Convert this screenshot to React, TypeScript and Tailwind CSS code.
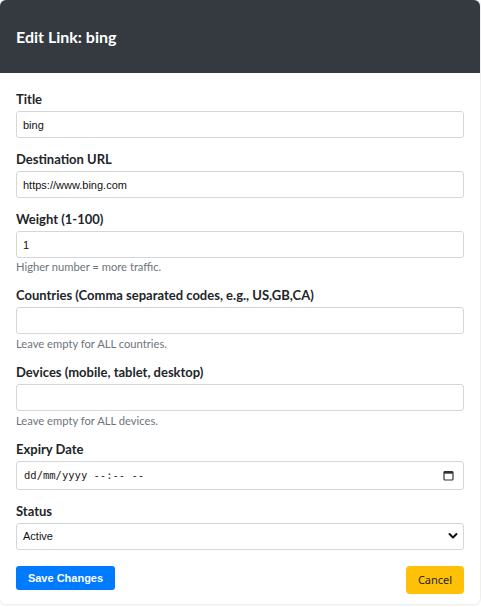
import React from 'react';

const labelCls = "block text-[13px] leading-[19px] font-bold text-[#212529] mb-0.5 font-['Lato',sans-serif]";
const inputCls =
  "block w-full h-[27px] px-[6px] rounded-[3px] border border-[#d4d7da] bg-white text-[11px] text-[#111] font-['Liberation_Sans',Arial,sans-serif] outline-none";
const helpCls = "mt-0.5 text-[11.2px] text-[#6c757d] font-['Lato',sans-serif]";

const Field: React.FC<{ label: string; help?: string; helpLeading?: string; children: React.ReactNode }> = ({
  label,
  help,
  helpLeading = 'leading-[15px]',
  children,
}) => (
  <div className="mb-3">
    <label className={labelCls}>{label}</label>
    {children}
    {help && <p className={helpCls + ' ' + helpLeading}>{help}</p>}
  </div>
);

const App: React.FC = () => {
  return (
    <div className="min-h-screen bg-white">
      <div className="w-[480px] overflow-hidden rounded-[6px] bg-white shadow-[0_0_3px_rgba(0,0,0,0.18)]">
        {/* Header */}
        <div className="flex h-[73px] items-center bg-[#343a40] px-4">
          <h2 className="text-[16px] font-bold text-white font-['Lato',sans-serif]">Edit Link: bing</h2>
        </div>

        {/* Form */}
        <form className="px-4 pt-[17px] pb-[10px]" onSubmit={(e) => e.preventDefault()}>
          <Field label="Title">
            <input className={inputCls} defaultValue="bing" />
          </Field>
          <Field label="Destination URL">
            <input className={inputCls} defaultValue="https://www.bing.com" />
          </Field>
          <Field label="Weight (1-100)" help="Higher number = more traffic." helpLeading="leading-[14px]">
            <input className={inputCls} defaultValue="1" />
          </Field>
          <Field label="Countries (Comma separated codes, e.g., US,GB,CA)" help="Leave empty for ALL countries.">
            <input className={inputCls} />
          </Field>
          <Field label="Devices (mobile, tablet, desktop)" help="Leave empty for ALL devices.">
            <input className={inputCls} />
          </Field>
          <Field label="Expiry Date">
            <div className="flex h-[29px] w-full items-center justify-between rounded-[3px] border border-[#d4d7da] bg-white pl-[7px] pr-[9px]">
              <span className="text-[10.5px] text-[#222] font-['DejaVu_Sans_Mono',monospace]">dd/mm/yyyy --:-- --</span>
              <svg width="11" height="11" viewBox="0 0 11 11" fill="none">
                <rect x="1" y="1.5" width="9" height="8.5" rx="1" stroke="#333" strokeWidth="1.2" />
                <rect x="1" y="1.5" width="9" height="2.2" fill="#333" />
              </svg>
            </div>
          </Field>
          <Field label="Status">
            <div className="relative">
              <select className={inputCls + ' appearance-none'} defaultValue="active">
                <option value="active">Active</option>
                <option value="inactive">Inactive</option>
              </select>
              <svg
                className="pointer-events-none absolute right-[6px] top-[9px]"
                width="10"
                height="8"
                viewBox="0 0 10 8"
                fill="none"
              >
                <path d="M1.5 2l3.5 3.5L8.5 2" stroke="#111" strokeWidth="2" strokeLinecap="round" strokeLinejoin="round" />
              </svg>
            </div>
          </Field>

          <div className="mt-4 flex items-start justify-between">
            <button
              type="submit"
              className="h-[24px] w-[99px] rounded-[3px] bg-[#007bff] text-[11px] font-bold text-white font-['Liberation_Sans',Arial,sans-serif]"
            >
              Save Changes
            </button>
            <button
              type="button"
              className="h-[28px] w-[58px] rounded-[4px] bg-[#ffc107] text-[11px] text-[#212529] font-['Noto_Sans',sans-serif]"
            >
              Cancel
            </button>
          </div>
        </form>
      </div>
    </div>
  );
};

export default App;
